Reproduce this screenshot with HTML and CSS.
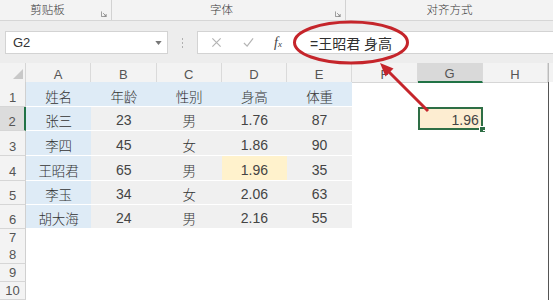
FILE: index.html
```html
<!DOCTYPE html>
<html lang="zh">
<head>
<meta charset="utf-8">
<title>Excel</title>
<link rel="stylesheet" href="styles.css">
</head>
<body>
<div class="app">
  <div class="ribbon">
    <div class="grp g1"><span>剪贴板</span><svg class="launcher" viewBox="0 0 7 7"><path d="M0.5 0.5V6.5H6.5" /><path d="M2.5 2.5L6 6M6 3.5V6H3.5" /></svg></div>
    <div class="grp g2"><span>字体</span><svg class="launcher" viewBox="0 0 7 7"><path d="M0.5 0.5V6.5H6.5" /><path d="M2.5 2.5L6 6M6 3.5V6H3.5" /></svg></div>
    <div class="grp g3"><span>对齐方式</span></div>
  </div>
  <div class="fbar">
    <div class="namebox"><span>G2</span><svg class="dd" viewBox="0 0 8 5"><path d="M0 0H8L4 5Z"/></svg></div>
    <div class="dots"><i></i><i></i><i></i></div>
    <div class="fbox">
      <div class="btns">
        <svg class="ic" viewBox="0 0 12 12"><path d="M1.5 1.5L10.5 10.5M10.5 1.5L1.5 10.5"/></svg>
        <svg class="ic" viewBox="0 0 12 12"><path d="M1 6.5L4.5 10L11 1.5"/></svg>
        <span class="fx">f<small>x</small></span>
      </div>
      <div class="ftext">=王昭君 身高</div>
    </div>
  </div>
  <div class="sheet">
    <div class="row hdr">
      <div class="corner"><svg viewBox="0 0 10 10"><path d="M10 0V10H0Z"/></svg></div>
      <div class="ch">A</div><div class="ch">B</div><div class="ch">C</div><div class="ch">D</div><div class="ch">E</div><div class="ch">F</div><div class="ch sel">G</div><div class="ch">H</div><div class="edge"></div>
    </div>
    <div class="row r25">
      <div class="rh">1</div>
      <div class="c bl">姓名</div><div class="c bl">年龄</div><div class="c bl">性别</div><div class="c bl">身高</div><div class="c bl">体重</div><div class="c"></div><div class="c"></div><div class="c"></div><div class="edge"></div>
    </div>
    <div class="row r24">
      <div class="rh sel">2</div>
      <div class="c bl">张三</div><div class="c gr">23</div><div class="c gr cj">男</div><div class="c gr">1.76</div><div class="c gr">87</div><div class="c"></div><div class="c active">1.96<i class="handle"></i></div><div class="c"></div><div class="edge"></div>
    </div>
    <div class="row r25">
      <div class="rh">3</div>
      <div class="c bl">李四</div><div class="c gr">45</div><div class="c gr cj">女</div><div class="c gr">1.86</div><div class="c gr">90</div><div class="c"></div><div class="c"></div><div class="c"></div><div class="edge"></div>
    </div>
    <div class="row r25">
      <div class="rh">4</div>
      <div class="c bl">王昭君</div><div class="c gr">65</div><div class="c gr cj">男</div><div class="c ye">1.96</div><div class="c gr">35</div><div class="c"></div><div class="c"></div><div class="c"></div><div class="edge"></div>
    </div>
    <div class="row r24">
      <div class="rh">5</div>
      <div class="c bl">李玉</div><div class="c gr">34</div><div class="c gr cj">女</div><div class="c gr">2.06</div><div class="c gr">63</div><div class="c"></div><div class="c"></div><div class="c"></div><div class="edge"></div>
    </div>
    <div class="row r24">
      <div class="rh">6</div>
      <div class="c bl">胡大海</div><div class="c gr">24</div><div class="c gr cj">男</div><div class="c gr">2.16</div><div class="c gr">55</div><div class="c"></div><div class="c"></div><div class="c"></div><div class="edge"></div>
    </div>
    <div class="row r17">
      <div class="rh sm">7</div>
      <div class="c e"></div><div class="c e"></div><div class="c e"></div><div class="c e"></div><div class="c e"></div><div class="c e"></div><div class="c e"></div><div class="c e"></div><div class="edge"></div>
    </div>
    <div class="row r18">
      <div class="rh sm">8</div>
      <div class="c e"></div><div class="c e"></div><div class="c e"></div><div class="c e"></div><div class="c e"></div><div class="c e"></div><div class="c e"></div><div class="c e"></div><div class="edge"></div>
    </div>
    <div class="row r18">
      <div class="rh sm">9</div>
      <div class="c e"></div><div class="c e"></div><div class="c e"></div><div class="c e"></div><div class="c e"></div><div class="c e"></div><div class="c e"></div><div class="c e"></div><div class="edge"></div>
    </div>
    <div class="row r18">
      <div class="rh sm">10</div>
      <div class="c e"></div><div class="c e"></div><div class="c e"></div><div class="c e"></div><div class="c e"></div><div class="c e"></div><div class="c e"></div><div class="c e"></div><div class="edge"></div>
    </div>
  </div>
  <svg class="annot" viewBox="0 0 553 300">
    <ellipse cx="351" cy="42.5" rx="56.5" ry="20.5" />
    <line x1="428" y1="111" x2="389" y2="72" />
    <polygon points="380,63 393.5,68.5 385.5,76.5" />
  </svg>
</div>
</body>
</html>
```
FILE: styles.css
```css
* { box-sizing: border-box; }
html, body { margin: 0; padding: 0; }
body {
  width: 553px;
  height: 300px;
  overflow: hidden;
  background: #ffffff;
  font-family: "Liberation Sans", "Noto Sans CJK SC", sans-serif;
  color: #444;
}
.app { position: relative; width: 553px; height: 300px; overflow: hidden; }

/* ribbon group labels */
.ribbon {
  display: flex;
  height: 21px;
  background: #f3f3f3;
  border-bottom: 1px solid #d6d6d6;
}
.grp {
  position: relative;
  display: flex;
  align-items: center;
  justify-content: center;
  font-family: "Noto Sans CJK SC", sans-serif;
  font-weight: 300;
  font-size: 11.5px;
  color: #3a3a3a;
  line-height: 1;
}
.g1 { width: 112px; padding-right: 16px; border-right: 1px solid #d2d2d2; }
.g2 { width: 234px; padding-right: 14px; border-right: 1px solid #d2d2d2; }
.g3 { flex: 1; }
.launcher {
  position: absolute;
  right: 4px;
  top: 11px;
  width: 6px;
  height: 6px;
  fill: none;
  stroke: #888;
  stroke-width: 1;
}

/* formula bar */
.fbar {
  display: flex;
  align-items: flex-start;
  height: 42px;
  padding: 10px 0 0 5px;
  background: #ededed;
}
.namebox {
  display: flex;
  align-items: center;
  justify-content: space-between;
  width: 163px;
  height: 23px;
  padding: 0 5px 0 7px;
  background: #fff;
  border: 1px solid #d3d3d3;
  font-size: 13px;
  color: #333;
}
.dd { width: 7px; height: 4px; fill: #777; }
.dots {
  display: flex;
  flex-direction: column;
  justify-content: center;
  gap: 2px;
  width: 29px;
  height: 23px;
  padding-left: 14px;
}
.dots i { display: block; width: 1px; height: 2px; background: #b0b0b0; }
.fbox {
  flex: 1;
  display: flex;
  align-items: center;
  height: 23px;
  background: #fff;
  border: 1px solid #d3d3d3;
  border-right: none;
}
.btns {
  display: flex;
  align-items: center;
  gap: 21px;
  width: 95px;
  height: 100%;
  padding-left: 13px;
}
.ic { width: 11px; height: 11px; fill: none; stroke: #b4b4b4; stroke-width: 1.3; }
.fx {
  font-family: "Liberation Serif", serif;
  font-style: italic;
  font-size: 14px;
  color: #444;
  margin-left: -1px;
}
.fx small { font-size: 9px; }
.ftext {
  padding-left: 17px;
  font-family: "Liberation Sans", "Noto Sans CJK SC", sans-serif;
  font-size: 14px;
  color: #2f2f2f;
}

/* sheet */
.sheet { display: flex; flex-direction: column; }
.row {
  display: grid;
  grid-template-columns: 26px repeat(8, 65.25px) 1fr;
}
.hdr { height: 19px; background: #f3f3f3; }
.r25 { height: 25px; }
.r24 { height: 24px; }
.r17 { height: 17px; }
.r18 { height: 18px; }

.corner {
  display: flex;
  align-items: flex-end;
  justify-content: flex-end;
  padding: 0 2px 3px 0;
  border-right: 1px solid #d6d6d6;
  border-bottom: 1px solid #d6d6d6;
}
.corner svg { width: 10px; height: 10px; fill: #c8c8c8; }
.ch {
  display: flex;
  align-items: center;
  justify-content: center;
  padding-top: 3px;
  font-size: 13px;
  color: #555;
  border-right: 1px solid #dadada;
  border-bottom: 1px solid #d6d6d6;
}
.ch.sel { background: #d9d9d9; border-bottom: 2px solid #217346; }
.hdr .edge { background: #f3f3f3; border-left: 1px solid #bbb; }

.rh {
  display: flex;
  align-items: flex-end;
  justify-content: center;
  padding-bottom: 1px;
  font-size: 13px;
  color: #555;
  background: #f3f3f3;
  border-right: 1px solid #d0d0d0;
  border-bottom: 1px solid #d6d6d6;
}
.rh.sm { padding-bottom: 0; line-height: 17px; }
.rh.sel { background: #dcdcdc; border-right: 2px solid #217346; }

.c {
  position: relative;
  display: flex;
  align-items: center;
  justify-content: center;
  padding-top: 3px;
  font-size: 14px;
  color: #444;
  border-bottom: 1px solid #fff;
}
.c.bl, .c.cj { font-family: "Noto Sans CJK SC", sans-serif; font-weight: 300; font-size: 13.5px; color: #333; }
.c.bl { background: #deebf6; }
.c.gr { background: #f0f0f0; }
.c.ye { background: #fff2cc; }
.c.active {
  justify-content: flex-end;
  padding-right: 4px;
  background: #fdedd1;
  box-shadow: inset 0 0 0 2px #2e6e45;
}
.handle {
  position: absolute;
  right: -3px;
  bottom: -3px;
  width: 5px;
  height: 5px;
  background: #2e6e45;
  border: 1px solid #fff;
  box-sizing: content-box;
}
.edge { border-left: 1px solid #555; background: #fff; }

/* annotation overlay */
.annot {
  position: absolute;
  left: 0;
  top: 0;
  width: 553px;
  height: 300px;
  pointer-events: none;
}
.annot ellipse { fill: none; stroke: #c5252b; stroke-width: 3; }
.annot line { stroke: #c5252b; stroke-width: 3; }
.annot polygon { fill: #c5252b; }
```
